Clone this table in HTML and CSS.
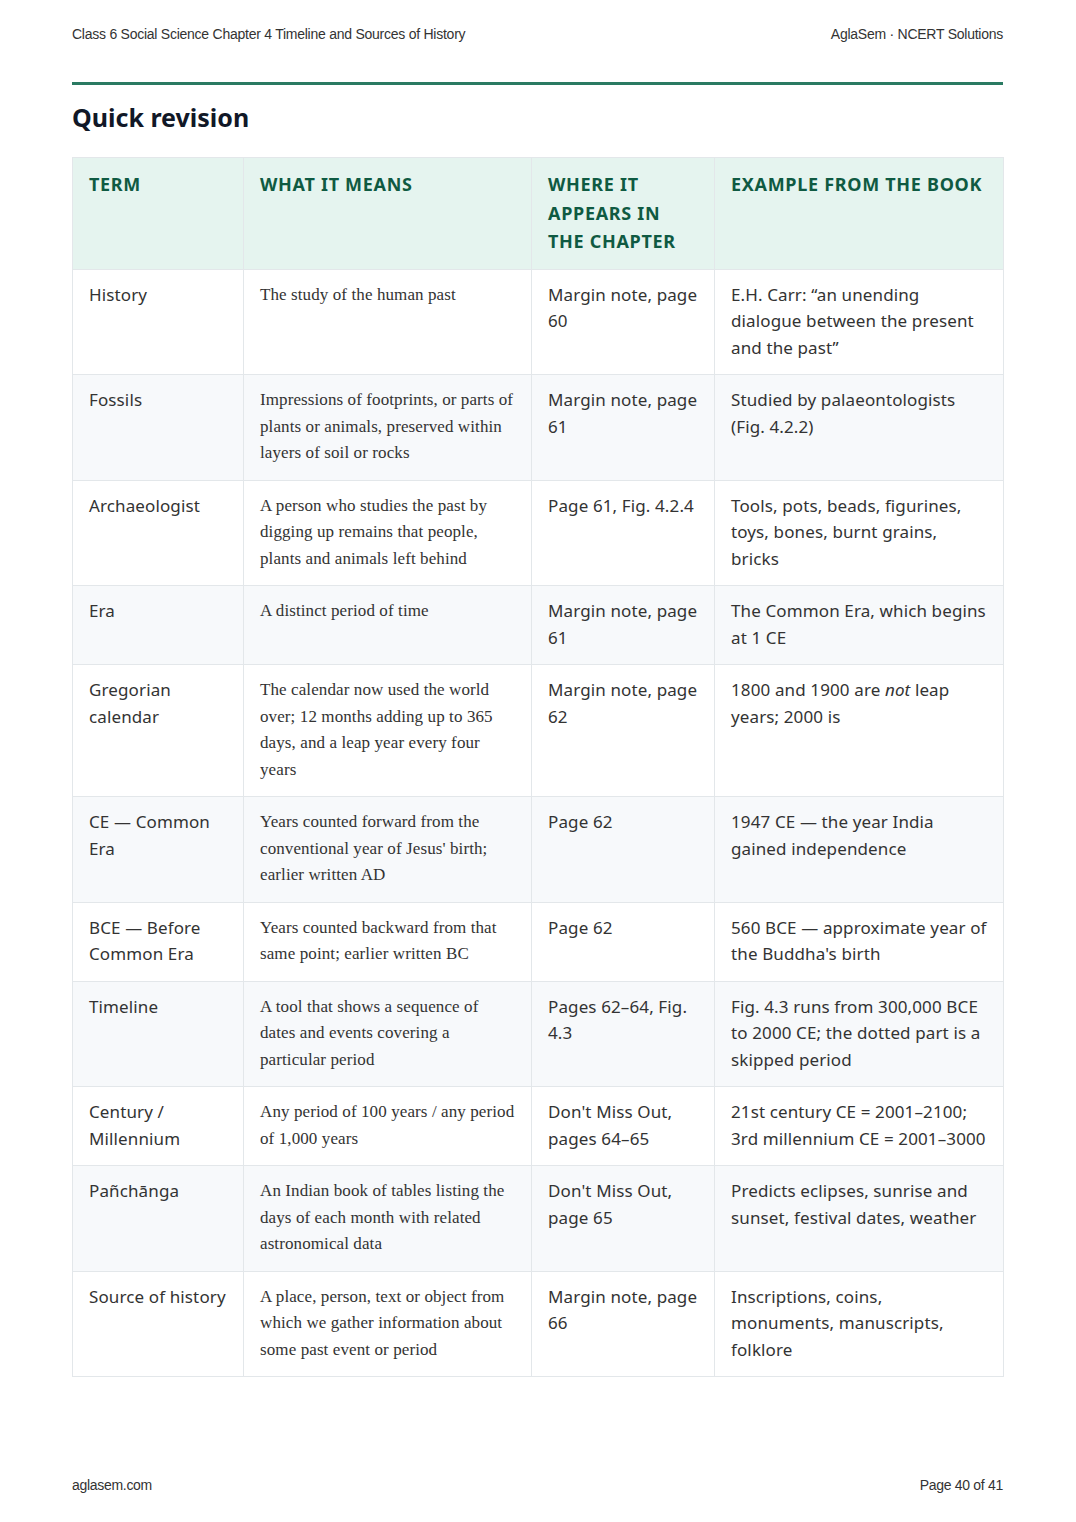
FILE: index.html
```html
<!DOCTYPE html>
<html lang="en">
<head>
<meta charset="utf-8">
<title>Quick revision</title>
<link rel="stylesheet" href="styles.css">
</head>
<body>
<div class="page">
  <header class="running-head">
    <span>Class 6 Social Science Chapter 4 Timeline and Sources of History</span>
    <span>AglaSem · NCERT Solutions</span>
  </header>
  <hr class="rule">
  <h2 class="title">Quick revision</h2>
  <table class="revision">
    <colgroup>
      <col class="c1"><col class="c2"><col class="c3"><col class="c4">
    </colgroup>
    <thead>
      <tr>
        <th>Term</th>
        <th>What it means</th>
        <th>Where it appears in the chapter</th>
        <th>Example from the book</th>
      </tr>
    </thead>
    <tbody>
      <tr>
        <td>History</td>
        <td class="serif">The study of the human past</td>
        <td>Margin note, page 60</td>
        <td>E.H. Carr: “an unending dialogue between the present and the past”</td>
      </tr>
      <tr>
        <td>Fossils</td>
        <td class="serif">Impressions of footprints, or parts of plants or animals, preserved within layers of soil or rocks</td>
        <td>Margin note, page 61</td>
        <td>Studied by palaeontologists (Fig. 4.2.2)</td>
      </tr>
      <tr>
        <td>Archaeologist</td>
        <td class="serif">A person who studies the past by digging up remains that people, plants and animals left behind</td>
        <td>Page 61, Fig. 4.2.4</td>
        <td>Tools, pots, beads, figurines, toys, bones, burnt grains, bricks</td>
      </tr>
      <tr>
        <td>Era</td>
        <td class="serif">A distinct period of time</td>
        <td>Margin note, page 61</td>
        <td>The Common Era, which begins at 1 CE</td>
      </tr>
      <tr>
        <td>Gregorian calendar</td>
        <td class="serif">The calendar now used the world over; 12 months adding up to 365 days, and a leap year every four years</td>
        <td>Margin note, page 62</td>
        <td>1800 and 1900 are <em>not</em> leap years; 2000 is</td>
      </tr>
      <tr>
        <td>CE — Common Era</td>
        <td class="serif">Years counted forward from the conventional year of Jesus' birth; earlier written AD</td>
        <td>Page 62</td>
        <td>1947 CE — the year India gained independence</td>
      </tr>
      <tr>
        <td>BCE — Before Common Era</td>
        <td class="serif">Years counted backward from that same point; earlier written BC</td>
        <td>Page 62</td>
        <td>560 BCE — approximate year of the Buddha's birth</td>
      </tr>
      <tr>
        <td>Timeline</td>
        <td class="serif">A tool that shows a sequence of dates and events covering a particular period</td>
        <td>Pages 62–64, Fig. 4.3</td>
        <td>Fig. 4.3 runs from 300,000 BCE to 2000 CE; the dotted part is a skipped period</td>
      </tr>
      <tr>
        <td>Century / Millennium</td>
        <td class="serif">Any period of 100 years / any period of 1,000 years</td>
        <td>Don't Miss Out, pages 64–65</td>
        <td>21st century CE = 2001–2100; 3rd millennium CE = 2001–3000</td>
      </tr>
      <tr>
        <td>Pañchānga</td>
        <td class="serif">An Indian book of tables listing the days of each month with related astronomical data</td>
        <td>Don't Miss Out, page 65</td>
        <td>Predicts eclipses, sunrise and sunset, festival dates, weather</td>
      </tr>
      <tr>
        <td>Source of history</td>
        <td class="serif">A place, person, text or object from which we gather information about some past event or period</td>
        <td>Margin note, page 66</td>
        <td>Inscriptions, coins, monuments, manuscripts, folklore</td>
      </tr>
    </tbody>
  </table>
  <footer class="running-foot">
    <span>aglasem.com</span>
    <span>Page 40 of 41</span>
  </footer>
</div>
</body>
</html>
```

FILE: styles.css
```css
html, body {
  margin: 0;
  padding: 0;
  background: #ffffff;
}

.page {
  box-sizing: border-box;
  width: 1076px;
  height: 1522px;
  padding: 0 73px 0 72px;
  display: flex;
  flex-direction: column;
  font-family: "Noto Sans", "Open Sans", sans-serif;
  color: #333333;
}

.running-head {
  display: flex;
  justify-content: space-between;
  padding-top: 26px;
  font-family: "Liberation Sans", Arial, sans-serif;
  font-size: 14px;
  line-height: 16px;
  color: #333333;
  letter-spacing: -0.25px;
}

.rule {
  margin: 40px 0 0 0;
  height: 3px;
  border: 0;
  background: #2a7a62;
}

.title {
  margin: 15px 0 0 0;
  font-family: "Noto Sans", "Open Sans", sans-serif;
  font-size: 25px;
  line-height: 34px;
  font-weight: 700;
  color: #111827;
}

.revision {
  margin-top: 23px;
  width: 931px;
  table-layout: fixed;
  border-collapse: collapse;
  border: 1px solid #e3e7ea;
}

.c1 { width: 171px; }
.c2 { width: 288px; }
.c3 { width: 183px; }
.c4 { width: 289px; }

.revision th,
.revision td {
  border: 1px solid #e3e7ea;
  padding: 12px 16px 13px 16px;
  text-align: left;
  vertical-align: top;
}

.revision th {
  background: #e5f4ef;
  color: #0f5a42;
  font-size: 18px;
  line-height: 28.5px;
  font-weight: 700;
  text-transform: uppercase;
  letter-spacing: 0.7px;
  padding-top: 12px;
  padding-bottom: 13px;
}

.revision td {
  font-size: 17px;
  line-height: 26.5px;
  letter-spacing: 0.12px;
  color: #333333;
}

.revision tbody tr:nth-child(even) td {
  background: #f7f9fb;
}

.revision td.serif {
  font-family: "Liberation Serif", "Times New Roman", serif;
  font-size: 17px;
  letter-spacing: 0.1px;
  color: #333333;
}

.running-foot {
  margin-top: auto;
  padding-bottom: 29px;
  display: flex;
  justify-content: space-between;
  font-family: "Liberation Sans", Arial, sans-serif;
  font-size: 14px;
  line-height: 16px;
  color: #333333;
  letter-spacing: -0.3px;
}
```
